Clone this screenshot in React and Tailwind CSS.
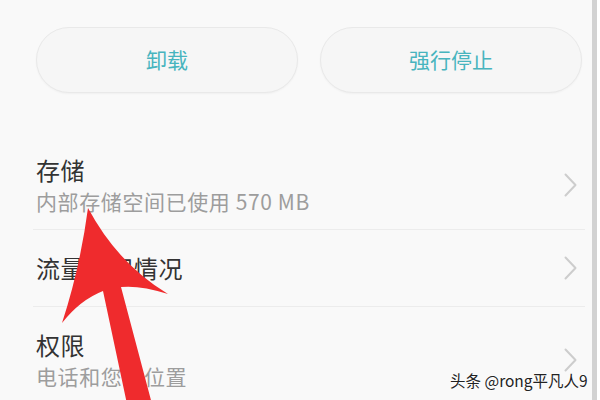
const FONT = "font-['Noto_Sans_CJK_SC','Noto_Sans',sans-serif]";

const items = [
  { title: "存储", sub: "内部存储空间已使用 570 MB" },
  { title: "流量使用情况" },
  { title: "权限", sub: "电话和您的位置" },
];

function Chevron() {
  return (
    <svg width="13" height="24" viewBox="0 0 13 24" fill="none">
      <path d="M1.5 1.5 L11.5 12 L1.5 22.5" stroke="#cdcdcd" strokeWidth="2" strokeLinecap="round" strokeLinejoin="round" />
    </svg>
  );
}

function ActionButton({ label }) {
  return (
    <button className="flex-1 h-[66px] rounded-full border border-[#e9e9e9] bg-[#f6f6f6] shadow-[0_1px_2px_rgba(0,0,0,0.04)] text-[21px] text-[#47b4be]">
      {label}
    </button>
  );
}

function ListItem({ title, sub }) {
  return (
    <div className={"flex items-center border-b border-[#ececec] pl-[3px] pr-[8px] " + (sub ? "pt-[24px] pb-[15px]" : "h-[77px]")}>
      <div className="flex-1 flex flex-col gap-[5px]">
        <div className="text-[24px] leading-[28px] text-[#333333] tracking-[0.5px]">{title}</div>
        {sub && <div className="text-[21px] leading-[25px] text-[#9d9d9d] tracking-[0.6px]">{sub}</div>}
      </div>
      <Chevron />
    </div>
  );
}

export default function App() {
  return (
    <div className={"relative w-[600px] h-[400px] overflow-hidden flex bg-white " + FONT}>
      <div className="w-[592px] h-full bg-[#f9f9f9] flex flex-col">
        <div className="mt-[27px] ml-[36px] w-[546px] flex gap-[22px]">
          <ActionButton label="卸载" />
          <ActionButton label="强行停止" />
        </div>
        <div className="mt-[39px] ml-[33px] mr-[7px] flex flex-col">
          {items.map(it => (
            <ListItem key={it.title} title={it.title} sub={it.sub} />
          ))}
        </div>
      </div>
      <div className="w-[5px] h-full bg-[#d2d2d2]" />

      <svg className="absolute left-0 top-0" width="600" height="400" viewBox="0 0 600 400">
        <path
          d="M88 208 Q118 264 168 294 Q140 285 121 287 L152 404 L127 404 L103 291 Q80 300 62 323 Q80 268 88 208 Z"
          fill="#ef2b2d"
        />
      </svg>

      <div className="absolute left-[450px] top-[369px] text-[15.5px] leading-[22px] text-[#222] [text-shadow:0_0_2px_#fff,0_0_2px_#fff]">
        头条 @rong平凡人9
      </div>
    </div>
  );
}
